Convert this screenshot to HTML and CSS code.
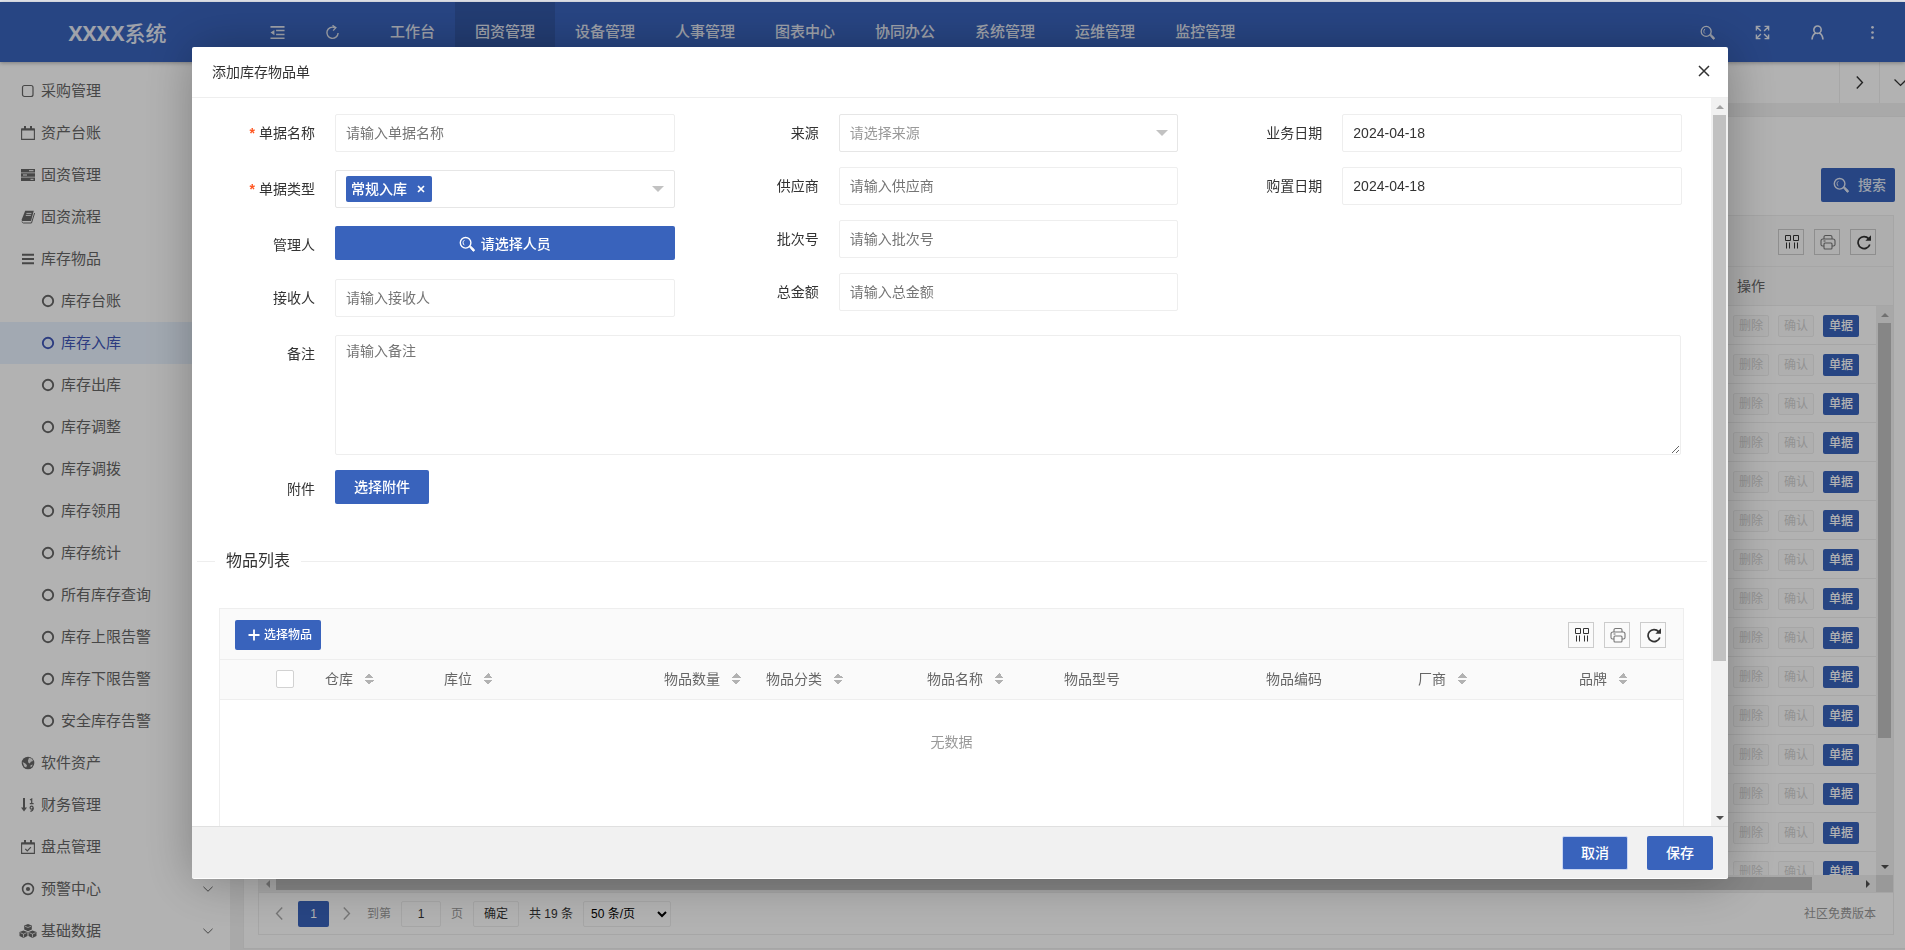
FILE: index.html
```html
<!DOCTYPE html>
<html lang="zh-CN">
<head>
<meta charset="utf-8">
<title>添加库存物品单</title>
<link rel="stylesheet" href="styles.css">
</head>
<body>
<svg class="sprite" aria-hidden="true">
  <symbol id="i-search" viewBox="0 0 16 16"><circle cx="6.6" cy="6.8" r="5.3" fill="none" stroke="currentColor" stroke-width="1.4"/><path d="M5.4 4.2a3 3 0 0 0 0 5" fill="none" stroke="currentColor" stroke-width="1"/><path d="M10.6 11l1-1 3.6 3.4a1 1 0 0 1-1.4 1.5z" fill="currentColor" stroke="currentColor" stroke-width=".9"/></symbol>
  <symbol id="i-shrink" viewBox="0 0 16 16"><path d="M.5 1h15v1.800H.5zM6.500 5H15.500v1.700H6.500zM6.500 9.200H15.500v1.700H6.500zM.5 13.200h15V15H.5zM.5 8l4.200-2.800v5.600z" fill="currentColor"/></symbol>
  <symbol id="i-reload" viewBox="0 0 16 16"><path d="M10.500 2.800A6 6 0 1 0 14 8.600" fill="none" stroke="currentColor" stroke-width="1.500"/><path d="M8 .4l3.600 2.400L8.700 6" fill="none" stroke="currentColor" stroke-width="1.400"/></symbol>
  <symbol id="i-full" viewBox="0 0 16 16"><path d="M1.500 5.800V1.500h4.300M1.500 1.500l4.800 4.800M10.200 1.500h4.300v4.300M14.500 1.500L9.700 6.300M1.500 10.200v4.300h4.300M1.500 14.500l4.800-4.800M14.500 10.200v4.300h-4.300M14.500 14.500L9.700 9.700" fill="none" stroke="currentColor" stroke-width="1.500"/></symbol>
  <symbol id="i-user" viewBox="0 0 16 16"><circle cx="8" cy="5" r="3.900" fill="none" stroke="currentColor" stroke-width="1.700"/><path d="M2.200 15.500c.2-4 1.800-6 4.200-7M13.800 15.500c-.2-4-1.800-6-4.200-7" fill="none" stroke="currentColor" stroke-width="1.800"/></symbol>
  <symbol id="i-more" viewBox="0 0 16 16"><g fill="currentColor"><circle cx="8" cy="2.500" r="1.400"/><circle cx="8" cy="8" r="1.400"/><circle cx="8" cy="13.500" r="1.400"/></g></symbol>
  <symbol id="i-square" viewBox="0 0 14 14"><rect x="1.500" y="1.500" width="10.500" height="11" rx="2" fill="none" stroke="currentColor" stroke-width="1.200"/></symbol>
  <symbol id="i-cal" viewBox="0 0 14 14"><path d="M.6 3h12.800v10.400H.6z" fill="none" stroke="currentColor" stroke-width="1.100"/><path d="M.6 2.400h12.800V4.600H.6zM3 0h2v3H3zM9 0h2v3H9z" fill="currentColor"/></symbol>
  <symbol id="i-calcheck" viewBox="0 0 14 14"><path d="M.6 3h12.800v10.400H.6z" fill="none" stroke="currentColor" stroke-width="1.100"/><path d="M.6 2.400h12.800V4.600H.6zM3 0h2v3H3zM9 0h2v3H9z" fill="currentColor"/><path d="M4.300 8.800l2 2 3.600-3.600" fill="none" stroke="currentColor" stroke-width="1.200"/></symbol>
  <symbol id="i-server" viewBox="0 0 14 14"><path d="M0 1h14v3.400H0zM0 5.300h14v3.400H0zM0 9.600h14V13H0z" fill="currentColor"/><path d="M8 2.700h4.500M2 7h4M9.500 11.300h3" stroke="#fff" stroke-width="1"/></symbol>
  <symbol id="i-book" viewBox="0 0 14 14"><path d="M4.200.8h8.600L10 11H1.700c-.8 0-1.300-.6-1-1.500z" fill="currentColor"/><path d="M1 11.500c.2 1 .8 1.500 1.500 1.500h8L13.600 3" fill="none" stroke="currentColor" stroke-width="1"/><path d="M5.400 3.400h5M4.800 5.400h5" stroke="#fff" stroke-width=".9"/></symbol>
  <symbol id="i-bars" viewBox="0 0 14 14"><path d="M1 1.800h12v2H1zM1 6h12v2H1zM1 10.200h12v2H1z" fill="currentColor"/></symbol>
  <symbol id="i-circle" viewBox="0 0 14 14"><circle cx="7" cy="7" r="5.200" fill="none" stroke="currentColor" stroke-width="1.900"/></symbol>
  <symbol id="i-globe" viewBox="0 0 14 14"><circle cx="7" cy="7" r="6.300" fill="currentColor"/><path d="M8 1.800l3 1 1 2.200-2.200.8-1 1.600-1.600-.8-.2-2zM1.600 6l2.800 1.400 1.600 1.800-.8 2.400-2-1.200zM9.500 9.200l2.200-.8-.8 2-1.400.8z" fill="#fff" opacity=".85"/></symbol>
  <symbol id="i-sort" viewBox="0 0 14 14"><path d="M3 0v11" stroke="currentColor" stroke-width="2"/><path d="M0 9.600h6L3 13.600z" fill="currentColor"/><path d="M9 2l1.700-1v4.500M8.800 5.600h3.800" fill="none" stroke="currentColor" stroke-width="1.200"/><circle cx="10.600" cy="9.700" r="1.500" fill="none" stroke="currentColor" stroke-width="1.200"/><path d="M12.200 9.700c0 2-.8 3.400-2.800 3.600" fill="none" stroke="currentColor" stroke-width="1.200"/></symbol>
  <symbol id="i-dot" viewBox="0 0 14 14"><circle cx="7" cy="7" r="5.400" fill="none" stroke="currentColor" stroke-width="1.600"/><circle cx="7" cy="7" r="2.100" fill="currentColor"/></symbol>
  <symbol id="i-cubes" viewBox="0 0 18 14"><path d="M9 0l3.800 1.600v4L9 7.300 5.200 5.600v-4zM4.500 6.400l4 1.700v4l-4 1.800-4-1.800v-4zM13.500 6.400l4 1.700v4l-4 1.800-4-1.800v-4z" fill="currentColor"/><path d="M6 2.200l3 1.300 3-1.300M1.300 8.700l3.200 1.400 3.200-1.400M10.300 8.700l3.200 1.400 3.200-1.400M4.500 10v3.300M13.500 10v3.300" fill="none" stroke="#fff" stroke-width=".7"/></symbol>
  <symbol id="i-cols" viewBox="0 0 16 16"><path d="M1.500 1.500h5v5h-5zM9.500 1.500h5v5h-5zM2.500 8.500v6M5.500 8.500v6M10.500 8.500v6M13.500 8.500v6" fill="none" stroke="currentColor" stroke-width="1"/></symbol>
  <symbol id="i-print" viewBox="0 0 16 16"><g fill="none" stroke="currentColor" stroke-width="1.100"><path d="M4 5V3a1.500 1.500 0 0 1 1.500-1.500h5A1.500 1.500 0 0 1 12 3v2"/><path d="M4 12H2.600A1.600 1.600 0 0 1 1 10.400V7a2 2 0 0 1 2-2h10a2 2 0 0 1 2 2v3.400a1.600 1.600 0 0 1-1.600 1.600H12"/><rect x="4" y="9" width="8" height="6" rx="1"/><path d="M3.500 7h2"/></g></symbol>
  <symbol id="i-refresh" viewBox="0 0 16 16"><path d="M12.600 4.600A6 6 0 1 0 13.800 10.400" fill="none" stroke="currentColor" stroke-width="1.700"/><path d="M15 1.200v5.600H9.400z" fill="currentColor"/></symbol>
  <symbol id="i-x" viewBox="0 0 12 12"><path d="M1 1l10 10M11 1L1 11" fill="none" stroke="currentColor" stroke-width="1.500"/></symbol>
  <symbol id="i-xb" viewBox="0 0 8 8"><path d="M1 1l6 6M7 1L1 7" fill="none" stroke="currentColor" stroke-width="1.700"/></symbol>
  <symbol id="i-right" viewBox="0 0 12 12"><path d="M3.500 .5L8.700 6l-5.200 5.500" fill="none" stroke="currentColor" stroke-width="1.300"/></symbol>
  <symbol id="i-left" viewBox="0 0 12 12"><path d="M8.500 .5L3.300 6l5.200 5.500" fill="none" stroke="currentColor" stroke-width="1.300"/></symbol>
  <symbol id="i-down" viewBox="0 0 12 12"><path d="M0.500 3.300L6 8.700l5.500-5.400" fill="none" stroke="currentColor" stroke-width="1.200"/></symbol>
  <symbol id="i-plus" viewBox="0 0 12 12"><path d="M6 .5v11M.5 6h11" stroke="currentColor" stroke-width="1.800"/></symbol>
</svg>

<div class="app">
  <header class="header">
    <div class="logo"><b>XXXX</b>系统</div>
    <div class="tools">
      <button class="tool" aria-label="收起菜单"><svg><use href="#i-shrink"/></svg></button>
      <button class="tool" aria-label="刷新"><svg><use href="#i-reload"/></svg></button>
    </div>
    <nav class="menu">
      <a href="#">工作台</a><a href="#" class="on">固资管理</a><a href="#">设备管理</a><a href="#">人事管理</a><a href="#">图表中心</a><a href="#">协同办公</a><a href="#">系统管理</a><a href="#">运维管理</a><a href="#">监控管理</a>
    </nav>
    <div class="tools tools-end">
      <button class="tool" aria-label="搜索"><svg><use href="#i-search"/></svg></button>
      <button class="tool" aria-label="全屏"><svg><use href="#i-full"/></svg></button>
      <button class="tool" aria-label="用户"><svg><use href="#i-user"/></svg></button>
      <button class="tool" aria-label="更多"><svg><use href="#i-more"/></svg></button>
    </div>
  </header>

  <div class="body">
    <nav class="side">
      <a href="#"><svg><use href="#i-square"/></svg>采购管理</a>
      <a href="#"><svg><use href="#i-cal"/></svg>资产台账</a>
      <a href="#"><svg><use href="#i-server"/></svg>固资管理</a>
      <a href="#"><svg><use href="#i-book"/></svg>固资流程</a>
      <a href="#"><svg><use href="#i-bars"/></svg>库存物品</a>
      <a href="#" class="sub"><svg><use href="#i-circle"/></svg>库存台账</a>
      <a href="#" class="sub on"><svg><use href="#i-circle"/></svg>库存入库</a>
      <a href="#" class="sub"><svg><use href="#i-circle"/></svg>库存出库</a>
      <a href="#" class="sub"><svg><use href="#i-circle"/></svg>库存调整</a>
      <a href="#" class="sub"><svg><use href="#i-circle"/></svg>库存调拨</a>
      <a href="#" class="sub"><svg><use href="#i-circle"/></svg>库存领用</a>
      <a href="#" class="sub"><svg><use href="#i-circle"/></svg>库存统计</a>
      <a href="#" class="sub"><svg><use href="#i-circle"/></svg>所有库存查询</a>
      <a href="#" class="sub"><svg><use href="#i-circle"/></svg>库存上限告警</a>
      <a href="#" class="sub"><svg><use href="#i-circle"/></svg>库存下限告警</a>
      <a href="#" class="sub"><svg><use href="#i-circle"/></svg>安全库存告警</a>
      <a href="#"><svg><use href="#i-globe"/></svg>软件资产</a>
      <a href="#"><svg><use href="#i-sort"/></svg>财务管理</a>
      <a href="#"><svg><use href="#i-calcheck"/></svg>盘点管理</a>
      <a href="#"><svg><use href="#i-dot"/></svg>预警中心<svg class="chev"><use href="#i-down"/></svg></a>
      <a href="#"><svg class="wide"><use href="#i-cubes"/></svg>基础数据<svg class="chev"><use href="#i-down"/></svg></a>
    </nav>

    <main class="main">
      <div class="tabs">
        <button aria-label="向右"><svg><use href="#i-right"/></svg></button>
        <button aria-label="展开"><svg><use href="#i-down"/></svg></button>
      </div>
      <section class="card">
        <div class="search-row"><button class="btn"><svg><use href="#i-search"/></svg><span>搜索</span></button></div>
        <div class="grid">
          <div class="gridbar">
            <button class="ib" aria-label="筛选列"><svg><use href="#i-cols"/></svg></button>
            <button class="ib soft" aria-label="打印"><svg><use href="#i-print"/></svg></button>
            <button class="ib" aria-label="刷新表格"><svg><use href="#i-refresh"/></svg></button>
          </div>
          <div class="gridhead">操作</div>
          <div class="gridmid">
            <div class="rows">
              <div class="row"><button disabled>删除</button><button disabled>确认</button><button>单据</button></div>
              <div class="row"><button disabled>删除</button><button disabled>确认</button><button>单据</button></div>
              <div class="row"><button disabled>删除</button><button disabled>确认</button><button>单据</button></div>
              <div class="row"><button disabled>删除</button><button disabled>确认</button><button>单据</button></div>
              <div class="row"><button disabled>删除</button><button disabled>确认</button><button>单据</button></div>
              <div class="row"><button disabled>删除</button><button disabled>确认</button><button>单据</button></div>
              <div class="row"><button disabled>删除</button><button disabled>确认</button><button>单据</button></div>
              <div class="row"><button disabled>删除</button><button disabled>确认</button><button>单据</button></div>
              <div class="row"><button disabled>删除</button><button disabled>确认</button><button>单据</button></div>
              <div class="row"><button disabled>删除</button><button disabled>确认</button><button>单据</button></div>
              <div class="row"><button disabled>删除</button><button disabled>确认</button><button>单据</button></div>
              <div class="row"><button disabled>删除</button><button disabled>确认</button><button>单据</button></div>
              <div class="row"><button disabled>删除</button><button disabled>确认</button><button>单据</button></div>
              <div class="row"><button disabled>删除</button><button disabled>确认</button><button>单据</button></div>
              <div class="row"><button disabled>删除</button><button disabled>确认</button><button>单据</button></div>
            </div>
            <div class="vbar"><i class="up"></i><i class="thumb grid-thumb"></i><i class="dn"></i></div>
          </div>
          <div class="hbar"><i class="lf"></i><i class="hthumb"></i><i class="rt"></i><i class="corner"></i></div>
          <div class="pager">
            <button class="arrow prev" aria-label="上一页"><svg><use href="#i-left"/></svg></button>
            <button class="cur">1</button>
            <button class="arrow next" aria-label="下一页"><svg><use href="#i-right"/></svg></button>
            <label for="pg">到第</label><input id="pg" value="1"><span class="mute">页</span>
            <button class="ok">确定</button>
            <span>共 19 条</span>
            <select aria-label="每页条数"><option>50 条/页</option></select>
            <span class="mute edition">社区免费版本</span>
          </div>
        </div>
      </section>
    </main>
  </div>
</div>

<div class="shade"></div>

<section class="modal" role="dialog" aria-labelledby="mt">
  <header class="mhead"><h1 id="mt">添加库存物品单</h1><button aria-label="关闭"><svg><use href="#i-x"/></svg></button></header>
  <div class="mwrap">
    <form class="mbody" id="f">
      <div class="cols">
        <div class="col col-a">
          <div class="item"><label for="a1"><em>*</em>单据名称</label><input id="a1" placeholder="请输入单据名称"></div>
          <div class="item"><label for="a2"><em>*</em>单据类型</label><div class="multi caret" id="a2" tabindex="0"><span class="tag">常规入库<svg><use href="#i-xb"/></svg></span></div></div>
          <div class="item picker"><label for="a3">管理人</label><button type="button" class="btn" id="a3"><svg><use href="#i-search"/></svg><span>请选择人员</span></button></div>
          <div class="item"><label for="a4">接收人</label><input id="a4" placeholder="请输入接收人"></div>
        </div>
        <div class="col">
          <div class="item"><label for="b1">来源</label><div class="caret"><select id="b1"><option>请选择来源</option></select></div></div>
          <div class="item"><label for="b2">供应商</label><input id="b2" placeholder="请输入供应商"></div>
          <div class="item"><label for="b3">批次号</label><input id="b3" placeholder="请输入批次号"></div>
          <div class="item"><label for="b4">总金额</label><input id="b4" placeholder="请输入总金额"></div>
        </div>
        <div class="col">
          <div class="item"><label for="c1">业务日期</label><input id="c1" value="2024-04-18"></div>
          <div class="item"><label for="c2">购置日期</label><input id="c2" value="2024-04-18"></div>
        </div>
      </div>
      <div class="item full"><label for="d1">备注</label><textarea id="d1" placeholder="请输入备注"></textarea></div>
      <div class="item full"><label for="d2">附件</label><button type="button" class="btn" id="d2">选择附件</button></div>

      <fieldset><legend>物品列表</legend></fieldset>

      <div class="list">
        <div class="gridbar">
          <button type="button" class="btn small"><svg><use href="#i-plus"/></svg>选择物品</button>
          <button type="button" class="ib" aria-label="筛选列"><svg><use href="#i-cols"/></svg></button>
          <button type="button" class="ib soft" aria-label="打印"><svg><use href="#i-print"/></svg></button>
          <button type="button" class="ib" aria-label="刷新表格"><svg><use href="#i-refresh"/></svg></button>
        </div>
        <table>
          <colgroup><col class="w41"><col class="w49"><col class="w119"><col class="w220"><col class="w102"><col class="w161"><col class="w137"><col class="w202"><col class="w152"><col class="w161"><col></colgroup>
          <thead><tr>
            <th></th><th><input type="checkbox" aria-label="全选"></th>
            <th>仓库<i class="sort"></i></th><th>库位<i class="sort"></i></th><th>物品数量<i class="sort"></i></th><th>物品分类<i class="sort"></i></th><th>物品名称<i class="sort"></i></th><th>物品型号</th><th>物品编码</th><th>厂商<i class="sort"></i></th><th>品牌<i class="sort"></i></th>
          </tr></thead>
          <tbody><tr><td colspan="11">无数据</td></tr></tbody>
        </table>
      </div>
    </form>
    <div class="vbar"><i class="up"></i><i class="thumb modal-thumb"></i><i class="dn"></i></div>
  </div>
  <footer class="mfoot"><button class="btn cancel">取消</button><button class="btn">保存</button></footer>
</section>
</body>
</html>
```

FILE: styles.css
```css
* { box-sizing: border-box; }
body {
  margin: 0;
  height: 100vh;
  overflow: hidden;
  background: #e4e7ee;
  font: 14px/20px "Liberation Sans", "Noto Sans CJK SC", sans-serif;
  color: #333;
}
button, input, select, textarea { font: inherit; color: inherit; margin: 0; }
button { border: 0; background: none; padding: 0; }
a { color: inherit; text-decoration: none; }
svg { display: block; flex: none; width: 16px; height: 16px; }
.sprite { position: absolute; width: 0; height: 0; }

.app {
  height: 100vh;
  padding-top: 2px;
  display: flex;
  flex-direction: column;
  overflow: hidden;
}

/* top bar */
.header {
  flex: none;
  display: flex;
  height: 60px;
  background: #3963bc;
  color: #e4e9f4;
  box-shadow: 0 1px 4px rgba(0, 0, 0, .3);
  z-index: 1;
}
.logo { width: 250px; padding-right: 15px; text-align: center; font-size: 21px; font-weight: 500; line-height: 62px; }
.logo b { font-family: "Open Sans", "Liberation Sans", sans-serif; font-weight: 700; }
.tools { display: flex; padding-right: 10px; }
.tools-end { margin-left: auto; padding-right: 5px; }
.tool { width: 55px; display: grid; place-items: center; }
.tool svg { width: 15px; height: 15px; }
.menu { display: flex; font-size: 15px; font-weight: 500; line-height: 60px; }
.menu a { padding: 0 20px; }
.menu .on { background: rgba(0, 0, 0, .12); }

/* side menu */
.body { flex: 1; min-height: 0; display: flex; }
.side { flex: none; width: 230px; padding-top: 8px; overflow: hidden; background: #fff; color: #666; font-size: 15px; }
.side a { display: flex; align-items: center; height: 42px; padding-left: 21px; padding-right: 15px; }
.side svg { width: 14px; height: 14px; margin-right: 6px; }
.side .wide { width: 18px; margin-left: -2px; margin-right: 4px; }
.side .sub { padding-left: 41px; }
.side .on { background: #e9f3ff; color: #3f57b8; }
.side .chev { width: 10px; height: 10px; margin: 0 2px 0 auto; }

/* main area */
.main { flex: 1; min-width: 0; display: flex; flex-direction: column; background: #f2f2f2; margin-right: -15px; }
.tabs { flex: none; height: 41px; display: flex; justify-content: flex-end; background: #fff; }
.tabs button { width: 40px; border-left: 1px solid #f0f0f0; display: grid; place-items: center; }
.tabs button:last-child { width: 41px; }
.tabs svg { width: 13px; height: 13px; }
.card {
  flex: 1;
  min-height: 0;
  display: flex;
  flex-direction: column;
  margin: 13px 10px 1px 13px;
  padding: 51px 14px 13px;
  border: 1px solid #eee;
  background: #fff;
}
.search-row { display: flex; justify-content: flex-end; margin-bottom: 13px; }
.btn {
  display: flex;
  align-items: center;
  justify-content: center;
  height: 34px;
  padding: 0 19px;
  border-radius: 2px;
  background: #3963bc;
  color: #fff;
  font-weight: 500;
  white-space: nowrap;
}
.search-row .btn { padding: 0 9px 0 12px; gap: 9px; color: #dfe6f5; }
.grid { flex: 1; min-height: 0; display: flex; flex-direction: column; margin-right: 1px; border: 1px solid #eee; }
.gridbar { flex: none; height: 51px; display: flex; align-items: center; justify-content: flex-end; gap: 10px; padding: 2px 17px 0 15px; background: #fafafa; border-bottom: 1px solid #eee; }
.gridbar .small { margin-right: auto; }
.ib { width: 26px; height: 26px; border: 1px solid #ccc; display: grid; place-items: center; color: #333; }
.ib svg { margin-left: 2px; }
.soft { color: #777; }
.gridhead { flex: none; height: 39px; display: flex; align-items: center; justify-content: flex-end; padding-right: 128px; background: #fafafa; border-bottom: 1px solid #eee; color: #666; }
.gridmid { flex: 1; min-height: 0; display: flex; }
.rows { flex: 1; overflow: hidden; }
.row { display: flex; align-items: center; justify-content: flex-end; gap: 9px; height: 39px; padding: 2px 17px 0 0; border-bottom: 1px solid #eee; }
.row button { width: 36px; height: 22px; border-radius: 2px; background: #3963bc; color: #fff; font-size: 12px; font-weight: 500; line-height: 20px; }
.row button:disabled { border: 1px solid #eee; background: #fbfbfb; color: #d2d2d2; font-weight: 400; }

/* scroll tracks */
.vbar { flex: none; width: 17px; display: flex; flex-direction: column; align-items: center; background: #f1f1f1; }
.up, .dn { flex: none; width: 17px; height: 17px; display: grid; place-items: center; }
.up::after, .dn::after { content: ""; border: 4px solid transparent; border-top-width: 0; border-bottom-color: #a3a3a3; }
.dn::after { border-top: 4px solid #505050; border-bottom-width: 0; }
.dn { margin-top: auto; }
.thumb { width: 13px; background: #c1c1c1; }
.grid-thumb { height: 73%; }
.modal-thumb { height: 75%; }
.hbar { flex: none; display: flex; align-items: center; height: 17px; background: #f1f1f1; }
.lf, .rt { flex: none; width: 17px; display: grid; place-items: center; }
.lf::after, .rt::after { content: ""; border: 4px solid transparent; border-left-width: 0; border-right-color: #a3a3a3; }
.rt::after { border-left: 4px solid #505050; border-right-width: 0; }
.hthumb { width: 94%; height: 13px; background: #c1c1c1; }
.rt { margin-left: auto; }
.corner { flex: none; width: 17px; height: 17px; background: #dcdcdc; }

.pager { flex: none; height: 42px; display: flex; align-items: center; gap: 10px; padding: 0 17px 0 14px; border-top: 1px solid #eee; font-size: 12px; }
.pager input, .pager select, .pager .ok { height: 26px; border: 1px solid #eee; border-radius: 2px; background: #fff; }
.pager input { width: 40px; text-align: center; }
.pager .ok { width: 46px; }
.pager select { width: 88px; padding-left: 3px; color: #000; }
.pager label, .mute { color: #999; }
.arrow { width: 12px; color: #aaa; }
.arrow svg { width: 13px; height: 13px; }
.prev { margin-right: 3px; }
.next { margin: 0 5px 0 1px; }
.cur { width: 31px; height: 26px; border-radius: 2px; background: #3963bc; color: #fff; }
.edition { margin-left: auto; }

/* dialog */
.shade { position: fixed; top: 2px; right: 0; bottom: 0; left: 0; background: rgba(0, 0, 0, .3); z-index: 2; }
.modal {
  position: fixed;
  top: 47px;
  right: 177px;
  bottom: 71px;
  left: 192px;
  z-index: 3;
  display: flex;
  flex-direction: column;
  padding-bottom: 1px;
  background: #fff;
  border-radius: 2px;
  box-shadow: 1px 1px 50px rgba(0, 0, 0, .3);
}
.mhead { flex: none; display: flex; align-items: center; justify-content: space-between; height: 51px; padding: 0 18px 0 20px; border-bottom: 1px solid #eee; }
.mhead h1 { margin: 0; font-size: 14px; font-weight: 400; }
.mhead button { padding-bottom: 2px; }
.mhead svg { width: 12px; height: 12px; }
.mwrap { flex: 1; min-height: 0; display: flex; }
.mbody { flex: 1; min-width: 0; overflow: hidden; padding-top: 16px; }
.cols { display: grid; grid-template-columns: repeat(3, 1fr); padding-right: 8px; }
.item { display: flex; padding-right: 21px; margin-bottom: 15px; }
.item label { flex: none; width: 143px; padding: 9px 20px 9px 0; text-align: right; white-space: nowrap; }
.item em { color: #ff5722; font-style: normal; font-weight: 700; margin-right: 4px; }
.item > input, .item > .btn, .item > .caret, .item > textarea { flex: 1; min-width: 0; }
.item input, .item select, .item textarea, .multi { height: 38px; padding: 0 10px; border: 1px solid #eee; border-radius: 2px; background: #fff; color: #333; }
.item ::placeholder { color: #757575; }
.caret { display: grid; align-items: center; }
.caret::after { content: ""; grid-area: 1 / 1; justify-self: end; margin-right: 10px; border: 6px solid transparent; border-top-color: #c2c2c2; border-bottom-width: 0; }
.item select { grid-area: 1 / 1; width: 100%; appearance: none; border-color: #e6e6e6; color: #999; }
.multi { border-color: #e6e6e6; }
.multi.caret::after { margin-right: 0; }
.tag { grid-area: 1 / 1; justify-self: start; display: flex; align-items: center; gap: 10px; height: 26px; padding: 0 7px 0 5px; border-radius: 2px; background: #3963bc; color: #fff; font-weight: 500; }
.tag svg { width: 8px; height: 8px; }
.col-a .item { margin-bottom: 18px; }
.col-a .picker { height: 34px; margin-bottom: 19px; }
.picker .btn { gap: 6px; padding-top: 1px; }
.full { padding-right: 30px; }
.full textarea { height: 120px; padding: 5px 10px; }
.full > .btn { flex: none; }
fieldset { margin: 43px 4px 0 5px; padding: 0; height: 47px; border: 0; border-top: 1px solid #eee; }
legend { margin-left: 18px; padding: 0 11px; font-size: 16px; line-height: 20px; }

.list { margin: 10px 27px 0; border: 1px solid #eee; }
.btn.small { height: 30px; padding: 0 9px 0 13px; gap: 4px; font-size: 12px; }
.small svg { width: 12px; height: 12px; }
.list table { width: 100%; table-layout: fixed; border-collapse: collapse; color: #666; }
.list th { height: 39px; padding: 0 0 0 15px; text-align: left; font-weight: 400; white-space: nowrap; background: #fafafa; border-bottom: 1px solid #eee; }
.list td { height: 300px; padding: 32px 0; vertical-align: top; text-align: center; color: #999; }
.list input { display: block; appearance: none; width: 18px; height: 18px; border: 1px solid #d2d2d2; border-radius: 2px; background: #fff; }
.sort { display: inline-block; vertical-align: -1px; width: 12px; height: 12px; margin-left: 10px; background:
  conic-gradient(from 135deg at 50% 0, #b2b2b2 90deg, transparent 0) top / 10px 5px no-repeat,
  conic-gradient(from -45deg at 50% 100%, #b2b2b2 90deg, transparent 0) bottom / 10px 5px no-repeat; }
.w41 { width: 41px; }
.w49 { width: 49px; }
.w102 { width: 102px; }
.w119 { width: 119px; }
.w137 { width: 137px; }
.w152 { width: 152px; }
.w161 { width: 161px; }
.w202 { width: 202px; }
.w220 { width: 220px; }

.mfoot { flex: none; display: flex; align-items: center; justify-content: flex-end; gap: 19px; height: 52px; padding: 0 15px; background: #f1f1f1; border-top: 1px solid #e0e0e0; }
.cancel { border: 1px solid #c9d6f2; padding: 0 18px; }
```
